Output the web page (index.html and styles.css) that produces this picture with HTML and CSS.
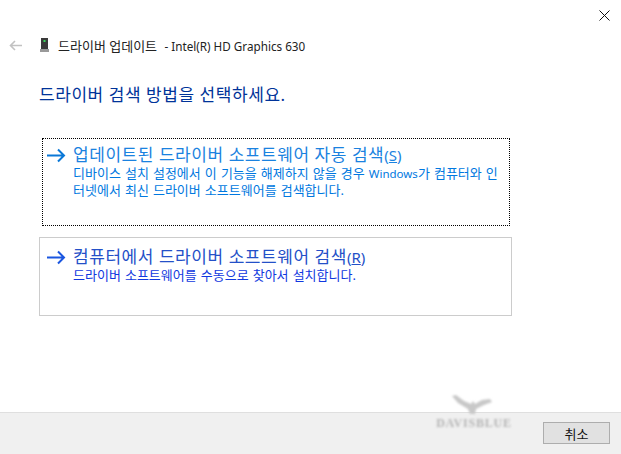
FILE: index.html
```html
<!DOCTYPE html>
<html lang="ko">
<head>
<meta charset="utf-8">
<title>드라이버 업데이트</title>
<link rel="stylesheet" href="styles.css">
</head>
<body>
<div class="window">
  <div class="titlebar">
    <svg class="close" width="11" height="11" viewBox="0 0 11 11"><path d="M.5.5l10 10M10.500.5l-10 10" stroke="#111" stroke-width="1" fill="none"/></svg>
  </div>
  <div class="header">
    <svg class="back" width="13" height="11" viewBox="0 0 13 11"><path d="M13 5.500H1.500M6 1L1.500 5.500 6 10" stroke="#c2c2c2" stroke-width="1.600" fill="none"/></svg>
    <svg class="device" width="9" height="14" viewBox="0 0 9 14"><rect x="1" y="0" width="7" height="11" fill="#3a3a3a"/><rect x="0" y="11" width="9" height="3" fill="#9a9a9a"/><rect x="3.500" y="2" width="2" height="2" fill="#38d85a"/></svg>
    <span class="header-title">드라이버 업데이트 <span class="header-latin">- Intel(R) HD Graphics 630</span></span>
  </div>
  <h1 class="heading">드라이버 검색 방법을 선택하세요.</h1>
  <div class="card card-focus">
    <svg class="arrow" width="19" height="15" viewBox="0 0 19 15"><path d="M0 7.500H17M11 1.500l6 6-6 6" stroke="#0a78d7" stroke-width="2" fill="none"/></svg>
    <div class="card-text card-text-light">
      <div class="card-title">업데이트된 드라이버 소프트웨어 자동 검색<span class="latin">(<u>S</u>)</span></div>
      <div class="card-desc">디바이스 설치 설정에서 이 기능을 해제하지 않을 경우 <span class="latin-small">Windows</span>가 컴퓨터와 인<br>터넷에서 최신 드라이버 소프트웨어를 검색합니다.</div>
    </div>
  </div>
  <div class="card card-plain">
    <svg class="arrow" width="19" height="15" viewBox="0 0 19 15"><path d="M0 7.500H17M11 1.500l6 6-6 6" stroke="#1a56e0" stroke-width="2" fill="none"/></svg>
    <div class="card-text card-text-dark">
      <div class="card-title">컴퓨터에서 드라이버 소프트웨어 검색<span class="latin">(<u>R</u>)</span></div>
      <div class="card-desc">드라이버 소프트웨어를 수동으로 찾아서 설치합니다.</div>
    </div>
  </div>
  <div class="footer">
    <div class="watermark">
      <svg class="bird" width="40" height="19" viewBox="0 0 40 19"><path d="M0 1l4-1 8 6 7 3 2-3 2 3 7-4 8-1 2 3-8 3-8 4-1 5h-5l-2-5-10-6Z" fill="#c8c8c8"/></svg>
      <span class="watermark-text">DAVISBLUE</span>
    </div>
    <button class="cancel">취소</button>
  </div>
</div>
</body>
</html>
```
FILE: styles.css
```css
* { box-sizing: border-box; }
html, body { margin: 0; padding: 0; background: #fff; }
body { font-family: "Noto Sans", "Noto Sans CJK KR", sans-serif; overflow: hidden; }
.window { width: 621px; height: 454px; display: flex; flex-direction: column; position: relative; }
.titlebar { height: 30px; display: flex; justify-content: flex-end; padding: 10px 11px 0 0; }
.close { display: block; }
.header { height: 30px; display: flex; align-items: center; padding-left: 9px; }
.back { margin-right: 18px; }
.device { margin-right: 9px; }
.header-title { font-size: 13px; color: #222; white-space: nowrap; }
.header-latin { font-size: 11.700px; margin-left: 4px; }
.heading { margin: 24px 0 0 39px; height: 54px; font-size: 17px; font-weight: 400; line-height: 22px; color: #003399; letter-spacing: .55px; white-space: nowrap; }
.card { display: flex; align-items: flex-start; }
.card-focus { margin: 0 0 0 42px; width: 468px; height: 88px; border: 1px dotted #000; padding: 6px 0 0 4px; }
.card-plain { margin: 11px 0 0 39px; width: 473px; height: 79px; border: 1px solid #ccc; padding: 9px 0 0 7px; }
.arrow { margin-top: 3px; flex: none; }
.card-text { margin-left: 7px; }
.card-text-light { color: #0078e0; }
.card-text-dark { color: #1038e0; }
.card-title { font-size: 17px; line-height: 20px; letter-spacing: .55px; white-space: nowrap; }
.card-text-light .card-title { color: #1a82e0; }
.card-text-dark .card-title { color: #2450c8; }
.latin { font-size: 15px; letter-spacing: 0; }
.card-desc { font-size: 13px; line-height: 16px; word-spacing: .7px; white-space: nowrap; }
.latin-small { font-size: 11.500px; }
.footer { margin-top: auto; height: 42px; background: #f0f0f0; border-top: 1px solid #dfdfdf; display: flex; justify-content: flex-end; padding: 9px 11px 0 0; }
.cancel { width: 67px; height: 22px; padding: 0; background: #e1e1e1; border: 1px solid #adadad; font-family: inherit; font-size: 13px; color: #111; }
.watermark { position: absolute; left: 432px; top: 395px; width: 84px; display: flex; flex-direction: column; align-items: center; filter: blur(1px); }
.bird { margin-left: -4px; }
.watermark-text { font-family: "Liberation Serif", serif; font-size: 12px; font-weight: 700; line-height: 12px; color: #b4b4b4; letter-spacing: .8px; margin-top: 3px; }
```
